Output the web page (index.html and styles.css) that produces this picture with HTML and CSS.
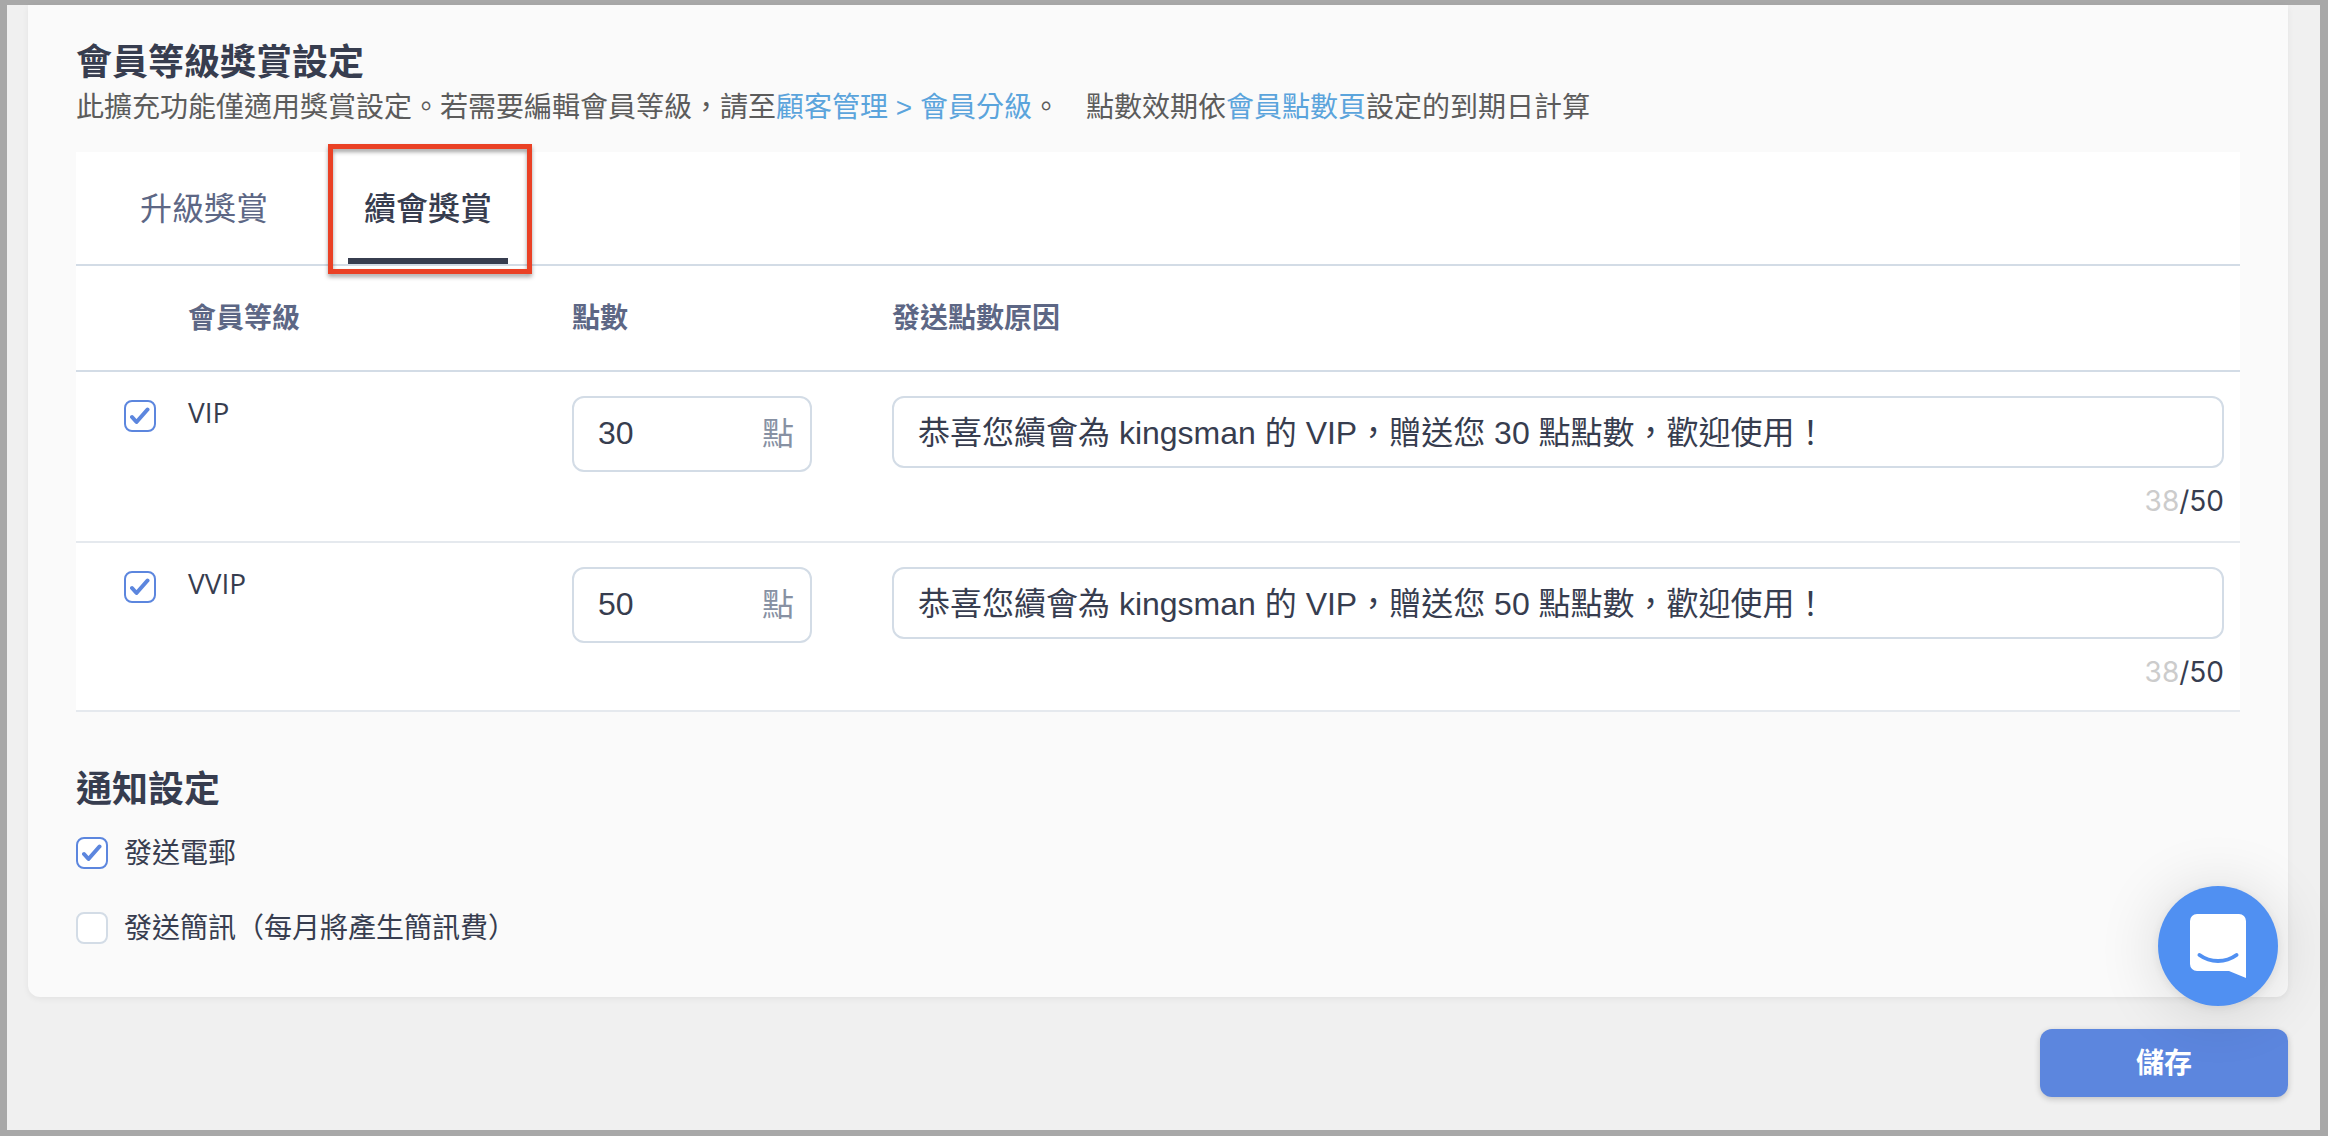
FILE: index.html
```html
<!DOCTYPE html>
<html lang="zh-Hant">
<head>
    <meta charset="UTF-8">
    <meta name="viewport" content="width=device-width, initial-scale=1.0">
    <title>會員等級獎賞設定</title>
    <link rel="stylesheet" href="styles.css">
</head>
<body>
    <main class="page">
        <form class="form">
            <div class="card">
                <section>
                    <h2 class="title">會員等級獎賞設定</h2>
                    <p class="desc">
                        <span>此擴充功能僅適用獎賞設定。若需要編輯會員等級，請至<a href="#">顧客管理 &gt; 會員分級</a>。</span>
                        <span>點數效期依<a href="#">會員點數頁</a>設定的到期日計算</span>
                    </p>

                    <div class="panel">
                        <div class="tabs" role="tablist">
                            <button type="button" class="tab" role="tab" aria-selected="false">升級獎賞</button>
                            <button type="button" class="tab active" role="tab" aria-selected="true">續會獎賞</button>
                        </div>
                        <table class="rewards">
                            <colgroup>
                                <col class="col-check">
                                <col class="col-level">
                                <col class="col-points">
                                <col>
                            </colgroup>
                            <thead>
                                <tr>
                                    <th></th>
                                    <th>會員等級</th>
                                    <th>點數</th>
                                    <th>發送點數原因</th>
                                </tr>
                            </thead>
                            <tbody>
                                <tr>
                                    <td><input type="checkbox" class="checkbox" id="vip" checked></td>
                                    <td><label class="level" for="vip">VIP</label></td>
                                    <td>
                                        <label class="points">
                                            <input type="text" value="30" aria-label="VIP 點數">
                                            <span>點</span>
                                        </label>
                                    </td>
                                    <td>
                                        <input type="text" class="reason" aria-label="VIP 發送點數原因" value="恭喜您續會為 kingsman 的 VIP，贈送您 30 點點數，歡迎使用！">
                                        <div class="counter"><span>38</span>/50</div>
                                    </td>
                                </tr>
                                <tr>
                                    <td><input type="checkbox" class="checkbox" id="vvip" checked></td>
                                    <td><label class="level" for="vvip">VVIP</label></td>
                                    <td>
                                        <label class="points">
                                            <input type="text" value="50" aria-label="VVIP 點數">
                                            <span>點</span>
                                        </label>
                                    </td>
                                    <td>
                                        <input type="text" class="reason" aria-label="VVIP 發送點數原因" value="恭喜您續會為 kingsman 的 VIP，贈送您 50 點點數，歡迎使用！">
                                        <div class="counter"><span>38</span>/50</div>
                                    </td>
                                </tr>
                            </tbody>
                        </table>
                    </div>
                </section>

                <section class="notify">
                    <h2 class="title">通知設定</h2>
                    <label class="option">
                        <input type="checkbox" class="checkbox" checked>
                        <span>發送電郵</span>
                    </label>
                    <label class="option">
                        <input type="checkbox" class="checkbox">
                        <span>發送簡訊（每月將產生簡訊費）</span>
                    </label>
                </section>
            </div>
            <button type="submit" class="save">儲存</button>
        </form>
    </main>

    <button type="button" class="chat" aria-label="聊天">
        <svg viewBox="0 0 56 64" width="56" height="64">
            <path d="M7 0h42a7 7 0 0 1 7 7v57l-17-7H7a7 7 0 0 1-7-7V7a7 7 0 0 1 7-7z" fill="#fff"/>
            <path d="M9.500 41c11 8 26 8 37 0" fill="none" stroke="#5090f2" stroke-width="4" stroke-linecap="round"/>
        </svg>
    </button>
</body>
</html>
```

FILE: styles.css
```css
* {
    box-sizing: border-box;
}
body {
    margin: 0;
    font-family: "Liberation Sans", "Noto Sans CJK TC", sans-serif;
    font-size: 28px;
    line-height: 40px;
    color: #373d4f;
    background-color: #f0f0f0;
}
input, button {
    font-family: inherit;
    color: inherit;
}
.page {
    min-height: 100vh;
    padding: 0 32px 32px 21px;
    border: solid #a8a8a8;
    border-width: 5px 8px 6px 7px;
}
.form {
    display: flex;
    flex-direction: column;
    align-items: flex-end;
    gap: 32px;
}
.card {
    width: 100%;
    padding: 32px 48px 48px;
    background-color: #fafafa;
    border-radius: 0 0 12px 12px;
    box-shadow: 0 2px 6px rgba(0, 0, 0, 0.06);
}
.title {
    margin: 0;
    font-size: 36px;
    line-height: 52px;
    font-weight: 700;
}
.desc {
    display: flex;
    gap: 26px;
    margin: 0;
    line-height: 38px;
    color: #5c5c5c;
}
a {
    color: #5ba4dc;
    text-decoration: none;
}

/* tabs + table */
.panel {
    margin-top: 25px;
    background-color: #fff;
}
.tabs {
    display: flex;
    gap: 64px;
    padding: 0 48px;
    border-bottom: 2px solid #d3dce6;
}
.tab {
    position: relative;
    height: 112px;
    padding: 2px 16px 0;
    font-size: 32px;
    color: #5d6785;
    background: none;
    border: 0;
    border-bottom: 6px solid transparent;
}
.tab.active {
    font-weight: 500;
    color: #373d4f;
    border-bottom-color: #373d4f;
}
.tab.active::after {
    content: "";
    position: absolute;
    inset: -8px -24px -16px -20px;
    border: 5px solid #ea4125;
    filter: drop-shadow(0 3px 2px rgba(0, 0, 0, 0.35));
}
.rewards {
    width: 100%;
    table-layout: fixed;
    border-spacing: 0;
}
.col-check {
    width: 112px;
}
.col-level {
    width: 384px;
}
.col-points {
    width: 320px;
}
th {
    height: 106px;
    padding: 2px 0 0;
    font-weight: 600;
    text-align: left;
    color: #5d6785;
    border-bottom: 2px solid #d3dce6;
}
td {
    padding: 24px 0 20px;
    vertical-align: top;
    border-bottom: 2px solid #e5e9ee;
}
tr:last-child td {
    padding-bottom: 18px;
}
td:first-child {
    padding: 28px 0 0 48px;
}
td:last-child {
    padding-right: 16px;
}
.level {
    display: block;
    font-family: "Open Sans", "Noto Sans CJK TC", sans-serif;
    line-height: 32px;
}
.checkbox {
    display: block;
    flex: none;
    appearance: none;
    width: 32px;
    height: 32px;
    margin: 0;
    background: #fff center no-repeat;
    border: 2px solid #d3dce6;
    border-radius: 8px;
}
.checkbox:checked {
    background-image: url("data:image/svg+xml,%3Csvg xmlns='http://www.w3.org/2000/svg' width='20' height='20'%3E%3Cpath d='M2 11l4.500 5L17.500 3.500' fill='none' stroke='%235c86de' stroke-width='4' stroke-linecap='round' stroke-linejoin='round'/%3E%3C/svg%3E");
    border-color: #5c86de;
}
.points {
    display: flex;
    align-items: center;
    width: 240px;
    height: 76px;
    padding: 0 16px 0 24px;
    font-size: 32px;
    border: 2px solid #d3dce6;
    border-radius: 12px;
}
.points input {
    flex: 1;
    min-width: 0;
    padding: 0 0 2px;
    font-size: 32px;
    background: none;
    border: 0;
}
.points span {
    color: #8791a3;
}
.reason {
    display: block;
    width: 100%;
    height: 72px;
    padding: 0 24px 5px;
    font-size: 32px;
    background-color: #fff;
    border: 2px solid #d3dce6;
    border-radius: 12px;
}
.counter {
    margin-top: 13px;
    font-family: Inter, sans-serif;
    text-align: right;
}
.counter span {
    color: #ccc;
}

/* notification options */
.notify {
    margin-top: 52px;
}
.option {
    display: flex;
    align-items: center;
    gap: 16px;
    width: fit-content;
    margin-top: 15px;
}
.option span {
    padding-top: 3px;
}
.option + .option {
    margin-top: 32px;
}

.save {
    width: 248px;
    height: 68px;
    padding: 0 0 4px;
    font-size: 28px;
    font-weight: 700;
    color: #fff;
    background-color: #5c86de;
    border: 0;
    border-radius: 12px;
    box-shadow: 0 2px 6px rgba(0, 0, 0, 0.2);
}

/* floating chat launcher */
.chat {
    position: fixed;
    right: 50px;
    bottom: 130px;
    display: flex;
    align-items: center;
    justify-content: center;
    width: 120px;
    height: 120px;
    padding: 0;
    background-color: #5090f2;
    border: 0;
    border-radius: 50%;
    box-shadow: 0 2px 12px rgba(0, 0, 0, 0.08), 0 4px 64px rgba(0, 0, 0, 0.14);
}
```
